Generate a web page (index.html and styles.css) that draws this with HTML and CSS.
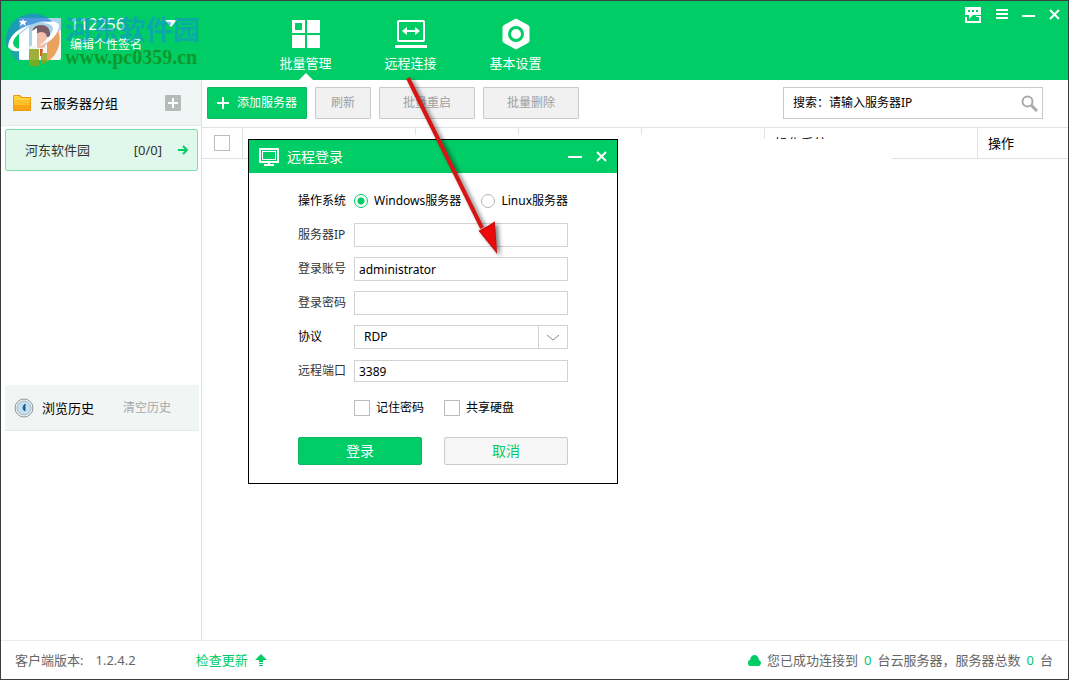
FILE: index.html
```html
<!DOCTYPE html>
<html lang="zh-CN">
<head>
    <meta charset="utf-8">
    <title>批量管理</title>
    <link rel="stylesheet" href="styles.css">
</head>
<body>
<div class="window">
    <header class="topbar">
        <div class="profile">
            <svg class="avatar" width="42" height="42" viewBox="0 0 42 42">
                <rect width="42" height="42" rx="2" fill="#f1f5f4"/>
                <path d="M0 0h42v12L0 34z" fill="#a9d3ea"/>
                <path d="M13 18Q12 7 22 7t9 12H13z" fill="#7b5f68"/>
                <path d="M17 16q6-4 10 0 3 9-2 14h-6q-5-5-2-14z" fill="#f0c0ab"/>
                <path d="M10 42q2-11 10-12l2 5 2-5q8 1 10 12z" fill="#fbf6ef"/>
                <path d="M21 31h3l-1 7h-2z" fill="#dc5427"/>
            </svg>
            <div class="profile-text">
                <div class="profile-name">112256
                    <svg width="12" height="8" viewBox="0 0 12 8"><path d="M0 0h12L6 7z" fill="#fff"/></svg>
                </div>
                <div class="profile-sign">编辑个性签名</div>
            </div>
            <div class="watermark">
                <svg width="56" height="56" viewBox="0 0 56 56">
                    <path d="M2 37A27 27 0 0 1 50 14Q40 6 24 15T2 37z" fill="#2a86d8" opacity=".7"/>
                    <path d="M53 19A27 27 0 0 1 42 51V32Q50 27 53 19z" fill="#e98f3a" opacity=".8"/>
                    <path d="M5 40A27 27 0 0 0 14 51V40z" fill="#2a96c0" opacity=".8"/>
                    <path d="M24 38h10v17q-6 1-10-1zM36 42h6v9l-6 3z" fill="#8aa51c" opacity=".85"/>
                    <path d="M3 36Q4 20 27 13 9 24 8 32q1 8 15 5Q9 44 3 36z" fill="#fff"/>
                    <path d="M36 12q16-4 18 2 0 12-20 21 14-11 14-18-1-5-12-5z" fill="#fff"/>
                    <path d="M14 24l10-8v32H14zM27 20l5-3v18h-5z" fill="#fff"/>
                    <path d="M18 8l1 2h3l-2 2 1 3-3-2-3 2 1-3-2-2h3z" fill="#fff"/>
                </svg>
                <div class="watermark-text">
                    <span class="watermark-name">河东软件园</span>
                    <span class="watermark-url">www.pc0359.cn</span>
                </div>
            </div>
        </div>
        <nav class="nav">
            <a class="nav-item active" href="#">
                <svg width="28" height="28" viewBox="0 0 28 28" fill="#fff">
                    <path fill-rule="evenodd" d="M0 0h13v13H0zM3 3v7h7V3z"/>
                    <path d="M15 0h13v13H15zM0 15h13v13H0zM15 15h13v13H15z"/>
                </svg>
                批量管理
            </a>
            <a class="nav-item" href="#">
                <svg width="32" height="28" viewBox="0 0 32 28" fill="none" stroke="#fff">
                    <rect x="3" y="1" width="26" height="20" stroke-width="2" rx="1"/>
                    <path d="M0 26.500h32" stroke-width="3"/>
                    <path d="M10 11h12" stroke-width="2"/>
                    <path d="M7 11l5-4v8zM25 11l-5-4v8z" fill="#fff" stroke="none"/>
                </svg>
                远程连接
            </a>
            <a class="nav-item" href="#">
                <svg width="28" height="32" viewBox="0 0 28 32">
                    <path d="M14 1l12 6.500q1 .5 1 1.500v14q0 1-1 1.500L14 31 2 24.500q-1-.5-1-1.500V9q0-1 1-1.500z" fill="#fff" stroke="#fff"/>
                    <circle cx="14" cy="16" r="6.500" fill="#fff" stroke="#00cd66" stroke-width="3"/>
                </svg>
                基本设置
            </a>
        </nav>
        <div class="window-controls">
            <button type="button" aria-label="反馈">
                <svg width="16" height="16" viewBox="0 0 16 16" fill="#fff">
                    <path fill-rule="evenodd" d="M0 0h16v8H8l-4 4V8H0zM3 3v2h2V3zM7 3v2h2V3zM11 3v2h2V3z"/>
                    <path d="M0 10h2v4h12v-4h-3v-1h5v7H0z"/>
                </svg>
            </button>
            <button type="button" aria-label="菜单">
                <svg width="13" height="12" viewBox="0 0 13 12"><path d="M1 1h12M1 5h12M1 9h12" stroke="#fff" stroke-width="2"/></svg>
            </button>
            <button type="button" aria-label="最小化">
                <svg width="13" height="12" viewBox="0 0 13 12"><path d="M0 7h13" stroke="#fff" stroke-width="2"/></svg>
            </button>
            <button type="button" aria-label="关闭">
                <svg width="12" height="12" viewBox="0 0 12 12"><path d="M1 1l9 9M10 1l-9 9" stroke="#fff" stroke-width="2"/></svg>
            </button>
        </div>
    </header>

    <div class="body">
        <aside class="sidebar">
            <section>
                <div class="group-head">
                    <svg width="18" height="16" viewBox="0 0 18 16">
                        <path d="M0 1q0-1 1-1h6l2 2h8q1 0 1 1v12q0 1-1 1H1q-1 0-1-1z" fill="#ea9a0a"/>
                        <path d="M1 1h5l2 2h9v2H1z" fill="#ffd53a"/>
                        <path d="M1 5h16v5H1z" fill="#ffc02a"/>
                        <path d="M1 10h16v5H1z" fill="#f8a617"/>
                    </svg>
                    <span class="group-title">云服务器分组</span>
                    <button type="button" class="group-add" aria-label="添加分组">
                        <svg width="16" height="16" viewBox="0 0 16 16"><rect width="16" height="16" rx="1" fill="#b4bcb9"/><path d="M8 3v10M3 8h10" stroke="#fff" stroke-width="2"/></svg>
                    </button>
                </div>
                <a class="group-item" href="#">
                    <span>河东软件园</span>
                    <span class="group-count">[0/0]</span>
                    <svg width="11" height="12" viewBox="0 0 11 12"><path d="M0 6h9M5 2l4 4-4 4" fill="none" stroke="#0c6" stroke-width="2"/></svg>
                </a>
            </section>
            <section>
                <div class="history">
                    <svg width="20" height="20" viewBox="0 0 20 20">
                        <circle cx="10" cy="10" r="9" fill="#f6f7f7" stroke="#8f9497"/>
                        <circle cx="10" cy="10" r="7" fill="#c2e0f3" stroke="#a7b4bc"/>
                        <path d="M11 6q-2 2-2 4t2 3z" fill="#235a86" stroke="#235a86"/>
                    </svg>
                    <span class="history-title">浏览历史</span>
                    <button type="button" class="history-clear">清空历史</button>
                </div>
            </section>
        </aside>

        <main class="main">
            <div class="toolbar">
                <button type="button" class="btn btn-add">
                    <svg width="12" height="12" viewBox="0 0 12 12"><path d="M6 0v12M0 6h12" stroke="#fff" stroke-width="2"/></svg>
                    添加服务器
                </button>
                <button type="button" class="btn" disabled>刷新</button>
                <button type="button" class="btn btn-wide" disabled>批量重启</button>
                <button type="button" class="btn btn-wide" disabled>批量删除</button>
                <div class="search">
                    <input type="text" aria-label="搜索" placeholder="搜索：请输入服务器IP">
                    <svg width="17" height="17" viewBox="0 0 17 17" fill="none" stroke="#a6aba9"><circle cx="6.500" cy="6.500" r="5" stroke-width="2"/><path d="M10 10l6 6" stroke-width="3"/></svg>
                </div>
            </div>
            <table class="servers">
                <colgroup>
                    <col class="col-check"><col class="col-name"><col class="col-state"><col class="col-ip"><col class="col-ip"><col class="col-system"><col>
                </colgroup>
                <thead>
                    <tr>
                        <th><input type="checkbox" class="check" aria-label="全选"></th>
                        <th></th>
                        <th></th>
                        <th></th>
                        <th></th>
                        <th>操作系统</th>
                        <th>操作</th>
                    </tr>
                </thead>
            </table>
            <div class="blank"></div>

            <form class="dialog">
                <div class="dialog-head">
                    <svg width="20" height="18" viewBox="0 0 20 18" fill="none" stroke="#fff">
                        <rect x="1" y="1" width="18" height="13" stroke-width="2"/>
                        <rect x="3.500" y="3.500" width="13" height="8"/>
                        <path d="M10 14v3M5 17h10" stroke-width="2"/>
                    </svg>
                    <span class="dialog-title">远程登录</span>
                    <button type="button" aria-label="最小化"><svg width="14" height="12" viewBox="0 0 14 12"><path d="M0 6h14" stroke="#fff" stroke-width="2"/></svg></button>
                    <button type="button" aria-label="关闭"><svg width="12" height="12" viewBox="0 0 12 12"><path d="M1 1l9 9M10 1l-9 9" stroke="#fff" stroke-width="2"/></svg></button>
                </div>
                <div class="fields">
                    <span class="dark">操作系统</span>
                    <div class="radios">
                        <label><input type="radio" name="os" checked>Windows服务器</label>
                        <label><input type="radio" name="os">Linux服务器</label>
                    </div>
                    <label for="ip">服务器IP</label>
                    <input type="text" class="field" id="ip">
                    <label for="account">登录账号</label>
                    <input type="text" class="field" id="account" value="administrator">
                    <label for="password">登录密码</label>
                    <input type="password" class="field" id="password">
                    <label for="protocol" class="dark">协议</label>
                    <div class="select">
                        <select id="protocol"><option>RDP</option></select>
                        <svg width="12" height="6" viewBox="0 0 12 6"><path d="M0 0l6 5 6-5" fill="none" stroke="#888"/></svg>
                    </div>
                    <label for="port">远程端口</label>
                    <input type="text" class="field field-port" id="port" value="3389">
                </div>
                <div class="options">
                    <label><input type="checkbox" class="check">记住密码</label>
                    <label><input type="checkbox" class="check">共享硬盘</label>
                </div>
                <div class="actions">
                    <button type="submit" class="btn-login">登录</button>
                    <button type="button" class="btn-cancel">取消</button>
                </div>
            </form>
        </main>
    </div>

    <footer class="statusbar">
        <span>客户端版本:</span>
        <span class="version">1.2.4.2</span>
        <a class="update" href="#">检查更新
            <svg width="12" height="12" viewBox="0 0 12 12" fill="#0c6"><path d="M6 0l6 6H8v2H4V6H0zM4 9h4v1H4zM4 11h4v1H4z"/></svg>
        </a>
        <div class="status">
            <svg width="13" height="11" viewBox="0 0 13 11"><path d="M2 5Q3 0 6.500 0T11 5q2 1 2 3t-2 3H2q-2 0-2-3t2-3z" fill="#0c6"/></svg>
            <span>您已成功连接到</span><b>0</b><span>台云服务器，服务器总数</span><b>0</b><span>台</span>
        </div>
    </footer>

    <!-- arrow from the nav entry to the dialog -->
    <svg class="arrow" width="120" height="190" viewBox="0 0 120 190">
        <path d="M10 3L84 153" stroke="#d81414" stroke-width="4"/>
        <path d="M98 176L82 156l6-3 8-5z" fill="#f00808" stroke="#d01010" stroke-width="2"/>
    </svg>
</div>
</body>
</html>
```
FILE: styles.css
```css
* {
    box-sizing: border-box;
}
body {
    margin: 0;
    font-family: "Noto Sans", "Noto Sans CJK SC", sans-serif;
    font-size: 12px;
    line-height: 16px;
    color: #333;
}
button, input, select {
    font: inherit;
    color: inherit;
    margin: 0;
}
button {
    padding: 0;
    border: none;
    background: none;
    cursor: pointer;
}
a {
    color: inherit;
    text-decoration: none;
}
svg {
    display: block;
    flex: none;
}
.window {
    position: relative;
    display: flex;
    flex-direction: column;
    min-height: 100vh;
    border: 1px solid #3a3f3d;
    background: #fff;
}

/* top bar */
.topbar {
    display: flex;
    height: 79px;
    background: #00cd66;
    color: #fff;
}
.profile {
    position: relative;
    display: flex;
    gap: 9px;
    width: 252px;
    padding: 17px 0 0 18px;
}
.profile-text {
    margin-top: -2px;
}
.profile-name {
    display: flex;
    align-items: center;
    gap: 40px;
    font-size: 16px;
}
.profile-sign {
    margin-top: 5px;
}
.watermark {
    position: absolute;
    left: 4px;
    top: 10px;
    display: flex;
    gap: 4px;
}
.watermark-text {
    display: flex;
    flex-direction: column;
    font-weight: bold;
}
.watermark-name {
    font-size: 27px;
    line-height: 38px;
    color: rgba(20, 140, 225, 0.55);
}
.watermark-url {
    font-family: "Liberation Serif", serif;
    font-size: 20px;
    line-height: 16px;
    color: rgba(20, 135, 20, 0.75);
}
.nav {
    display: flex;
}
.nav-item {
    position: relative;
    display: flex;
    flex-direction: column;
    align-items: center;
    justify-content: space-between;
    width: 105px;
    padding: 17px 0 9px;
    font-size: 13px;
}
.nav-item svg {
    height: 32px;
}
.nav-item.active::after {
    content: "";
    position: absolute;
    bottom: 0;
    border: 7px solid transparent;
    border-top: none;
    border-bottom-color: #fff;
}
.window-controls {
    display: flex;
    align-items: flex-start;
    gap: 14px;
    margin-left: auto;
    padding: 6px 7px 0 0;
}
.window-controls button {
    display: flex;
    align-items: center;
    height: 16px;
}

/* sidebar */
.body {
    display: flex;
    flex: 1;
}
.sidebar {
    display: grid;
    grid-template-rows: 6fr 5fr;
    width: 201px;
    border-right: 1px solid #dfdfdf;
}
.group-head {
    display: flex;
    align-items: center;
    height: 46px;
    padding: 0 20px 0 12px;
    background: #f2f5f5;
    border-bottom: 1px solid #e8ecec;
    font-size: 13px;
    color: #000;
}
.group-title {
    margin-left: 9px;
}
.group-add {
    margin-left: auto;
}
.group-item {
    display: flex;
    align-items: center;
    height: 42px;
    margin: 3px 3px 0 4px;
    padding: 0 8px 0 19px;
    background: #dff8eb;
    border: 1px solid #7ddbab;
    border-radius: 2px;
    font-size: 13px;
}
.group-count {
    margin: 0 16px 0 auto;
}
.history {
    display: flex;
    align-items: center;
    height: 46px;
    margin: 0 2px 0 4px;
    padding: 0 28px 0 9px;
    background: #f1f5f4;
    border-bottom: 1px solid #e4ebe9;
}
.history-title {
    margin-left: 8px;
    font-size: 13px;
    color: #000;
}
.history-clear {
    margin-left: auto;
    color: #a5a8a7;
}

/* main area */
.main {
    position: relative;
    flex: 1;
    min-width: 0;
}
.toolbar {
    display: flex;
    gap: 8px;
    padding: 7px 25px 8px 5px;
}
.btn {
    min-width: 56px;
    height: 32px;
    background: #f1f1f1;
    border: 1px solid #c9c9c9;
    border-radius: 1px;
    color: #a0a0a0;
}
.btn-wide {
    min-width: 96px;
}
.btn-add {
    display: flex;
    align-items: center;
    justify-content: center;
    gap: 8px;
    min-width: 100px;
    background: #00cd66;
    border-color: #14b560;
    color: #fff;
}
.search {
    display: flex;
    align-items: center;
    width: 260px;
    height: 32px;
    margin-left: auto;
    padding: 0 4px 0 9px;
    border: 1px solid #c8c8c8;
    color: #000;
}
.search input {
    flex: 1;
    min-width: 0;
    padding: 0;
    border: none;
    outline: none;
}
.search input::placeholder {
    font-family: "Noto Sans", "Noto Sans CJK TC", sans-serif;
    color: #000;
}
.servers {
    width: 100%;
    table-layout: fixed;
    border-spacing: 0;
    border-top: 1px solid #e2e2e2;
    color: #000;
}
.servers th {
    height: 31px;
    padding: 0 10px;
    border-right: 1px solid #e2e2e2;
    border-bottom: 1px solid #e2e2e2;
    font-size: 13px;
    font-weight: normal;
    text-align: left;
}
.servers th:first-child {
    padding: 0 12px;
}
.servers th:last-child {
    border-right: none;
}
.col-check {
    width: 41px;
}
.col-name {
    width: 173px;
}
.col-state {
    width: 103px;
}
.col-ip {
    width: 123px;
}
.col-system {
    width: 213px;
}
.check {
    display: block;
    appearance: none;
    width: 16px;
    height: 16px;
    background: #fff;
    border: 1px solid #bdbdbd;
}
.blank {
    position: absolute;
    left: 416px;
    top: 59px;
    width: 274px;
    height: 22px;
    background: #fff;
}

/* login dialog */
.dialog {
    position: absolute;
    left: 46px;
    top: 59px;
    width: 370px;
    padding-bottom: 18px;
    background: #fff;
    border: 1px solid #000;
    box-shadow: 0 -4px #fff, 28px -4px #fff;
}
.dialog-head {
    display: flex;
    align-items: center;
    gap: 14px;
    height: 33px;
    padding: 0 9px 0 10px;
    background: #00cd66;
    color: #fff;
}
.dialog-title {
    flex: 1;
    margin-left: -6px;
    font-size: 14px;
}
.fields {
    display: grid;
    grid-template-columns: 56px 1fr;
    grid-auto-rows: 34px;
    align-items: center;
    padding: 11px 49px 0;
}
.dark, .radios, .options {
    color: #000;
}
.radios {
    display: flex;
    justify-content: space-between;
    white-space: nowrap;
}
.radios label, .options label {
    display: flex;
    align-items: center;
    gap: 6px;
}
.radios input {
    appearance: none;
    width: 14px;
    height: 14px;
    border: 1px solid #b5b5b5;
    border-radius: 50%;
}
.radios input:checked {
    border-color: #0c6;
    background: radial-gradient(#0c6 3px, #fff 4px);
}
.field {
    width: 100%;
    height: 24px;
    padding: 0 4px;
    border: 1px solid #d2d2d2;
    color: #000;
}
.field-port {
    height: 22px;
}
.select {
    position: relative;
    height: 24px;
}
.select select {
    appearance: none;
    width: 100%;
    height: 24px;
    padding: 0 9px;
    background: linear-gradient(#d2d2d2, #d2d2d2) right 28px top / 1px 100% no-repeat #fff;
    border: 1px solid #d2d2d2;
    color: #000;
}
.select svg {
    position: absolute;
    right: 9px;
    top: 10px;
}
.options {
    display: grid;
    grid-template-columns: 90px 1fr;
    align-items: center;
    height: 40px;
    padding: 0 49px 0 105px;
}
.actions {
    display: grid;
    grid-template-columns: 1fr 1fr;
    gap: 22px;
    padding: 9px 49px 0;
}
.actions button {
    height: 28px;
    border: 1px solid #c9cccb;
    border-radius: 2px;
    font-size: 14px;
}
.btn-login {
    background: #00cd66;
    color: #fff;
}
.actions .btn-login {
    border-color: #10b860;
}
.btn-cancel {
    background: #f6f6f6;
    color: #0c6;
}

/* status bar */
.statusbar {
    display: flex;
    align-items: center;
    height: 39px;
    padding: 0 15px 0 14px;
    border-top: 1px solid #e8ecec;
    font-size: 13px;
    color: #666;
}
.version {
    margin-left: 12px;
}
.update {
    display: flex;
    align-items: center;
    gap: 7px;
    margin-left: 60px;
    color: #0c6;
}
.status {
    display: flex;
    align-items: center;
    gap: 6px;
    margin-left: auto;
    font-family: "Noto Sans", "Noto Sans CJK TC", sans-serif;
}
.status b {
    font-weight: normal;
    color: #0c6;
}

.arrow {
    position: absolute;
    left: 397px;
    top: 74px;
    filter: drop-shadow(3px 2px 2px rgba(0, 0, 0, 0.5));
    pointer-events: none;
}
```
